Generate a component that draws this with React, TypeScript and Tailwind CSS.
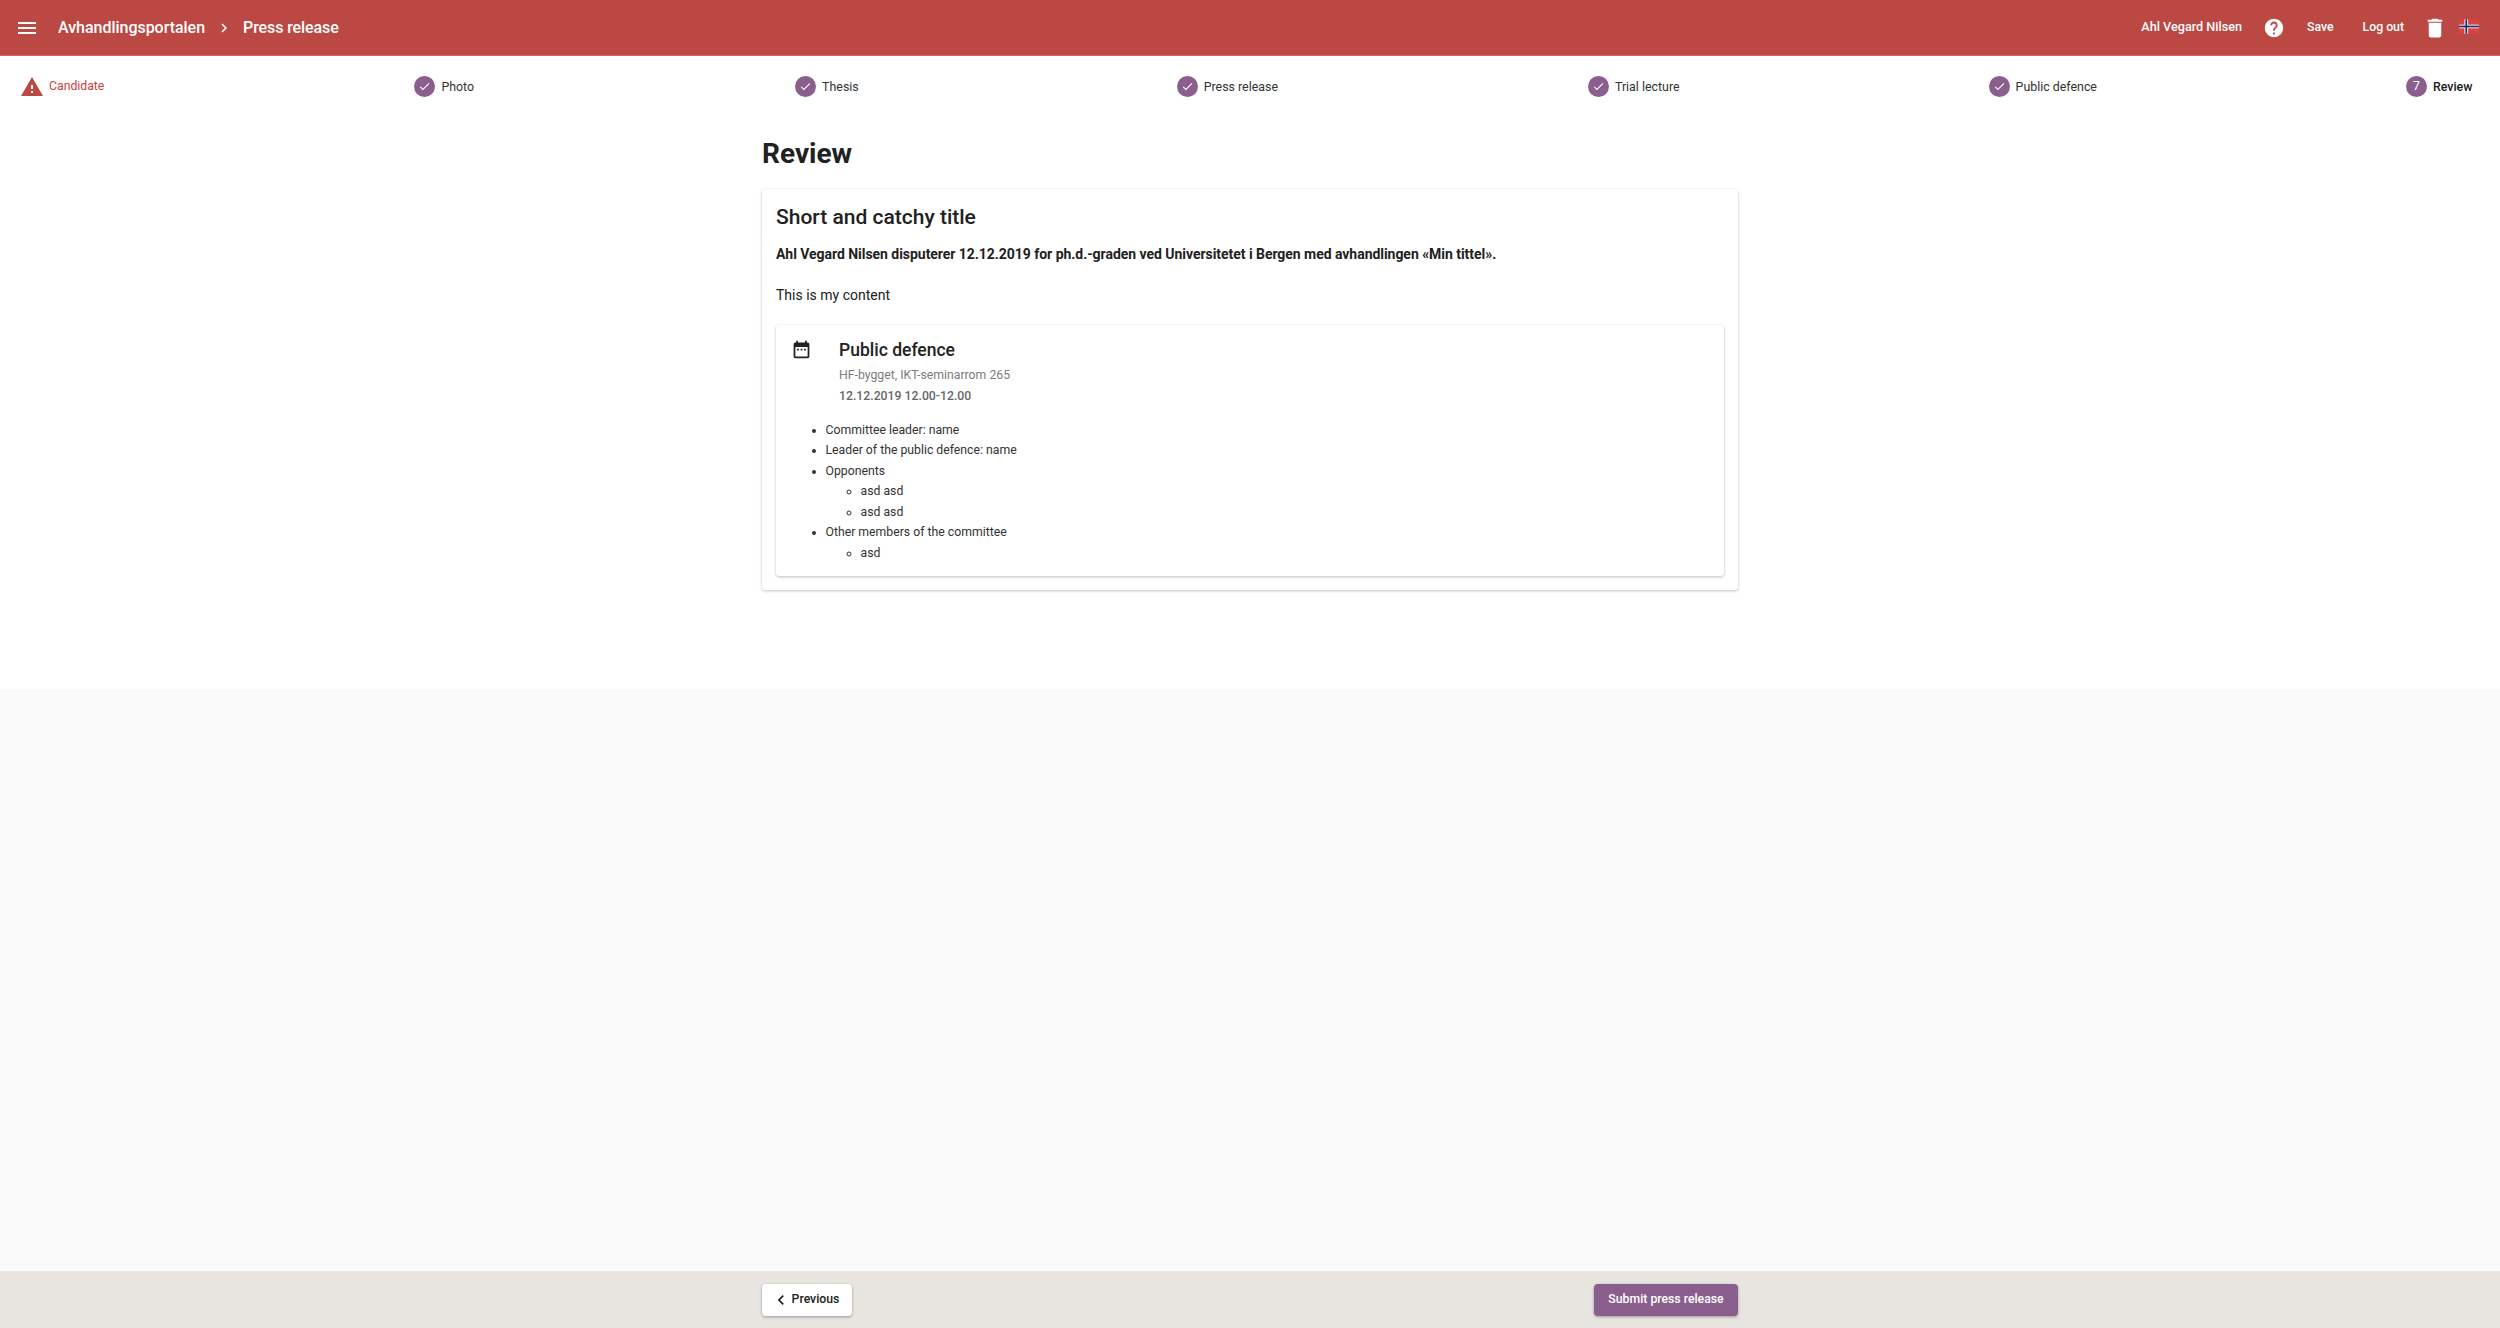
import React from "react";

const Check = () => (
  <span className="flex h-[21px] w-[21px] shrink-0 items-center justify-center rounded-full bg-[#8a5f8d]">
    <svg viewBox="0 0 24 24" className="h-[13px] w-[13px]" fill="#ffffff">
      <path d="M9 16.17 4.83 12l-1.42 1.41L9 19 21 7l-1.41-1.41z" />
    </svg>
  </span>
);

const Step = ({ label, ml }: { label: string; ml: string }) => (
  <div className={`flex items-center ${ml}`}>
    <Check />
    <span className="ml-[6px] text-[12.4px] leading-[21px] text-[#333333]">{label}</span>
  </div>
);

const Flag = () => (
  <svg viewBox="0 0 22 16" className="h-[15px] w-[20px]">
    <rect width="22" height="16" fill="#d9423f" />
    <rect x="6" width="4" height="16" fill="#ffffff" />
    <rect y="6" width="22" height="4" fill="#ffffff" />
    <rect x="7" width="2" height="16" fill="#1f2f6e" />
    <rect y="7" width="22" height="2" fill="#1f2f6e" />
  </svg>
);

export default function App() {
  return (
    <div className="flex h-[1328px] w-full flex-col overflow-hidden bg-[#fafafa] font-['Roboto','Liberation_Sans',sans-serif] text-[#212121]">
      <header className="flex h-[56px] shrink-0 items-center border-b border-[#e0605a] bg-[#bc4843] pl-[15px] pr-[21px] text-white">
        <svg viewBox="0 0 24 24" className="h-[24px] w-[24px]" fill="#ffffff">
          <path d="M3 18h18v-2H3v2zm0-5h18v-2H3v2zm0-7v2h18V6H3z" />
        </svg>
        <span className="ml-[19px] text-[16px] font-medium leading-[24px] tracking-[-0.03px]">Avhandlingsportalen</span>
        <svg viewBox="0 0 24 24" className="ml-[10px] h-[18px] w-[18px]" fill="#ffffff">
          <path d="M8.59 16.59 13.17 12 8.59 7.41 10 6l6 6-6 6z" />
        </svg>
        <span className="ml-[10px] text-[16px] font-medium leading-[24px] tracking-[-0.1px]">Press release</span>
        <div className="ml-auto flex items-center">
          <span className="text-[12.65px] font-medium">Ahl Vegard Nilsen</span>
          <svg viewBox="0 0 24 24" className="ml-[21px] h-[22px] w-[22px]" fill="#ffffff">
            <path d="M12 2C6.48 2 2 6.48 2 12s4.48 10 10 10 10-4.48 10-10S17.52 2 12 2zm1 17h-2v-2h2v2zm2.07-7.75-.9.92C13.45 12.9 13 13.5 13 15h-2v-.5c0-1.1.45-2.1 1.17-2.83l1.24-1.26c.37-.36.59-.86.59-1.41 0-1.1-.9-2-2-2s-2 .9-2 2H8c0-2.21 1.79-4 4-4s4 1.79 4 4c0 .88-.36 1.68-.93 2.25z" />
          </svg>
          <span className="ml-[22px] text-[12.25px] font-medium">Save</span>
          <span className="ml-[29px] text-[12.25px] font-medium">Log out</span>
          <svg viewBox="0 0 24 24" className="ml-[21px] h-[20px] w-[20px] scale-125" fill="#ffffff">
            <path d="M6 19c0 1.1.9 2 2 2h8c1.1 0 2-.9 2-2V7H6v12zM19 4h-3.5l-1-1h-5l-1 1H5v2h14V4z" />
          </svg>
          <span className="ml-[14px] flex -translate-y-[1px]"><Flag /></span>
        </div>
      </header>

      <main className="shrink-0 bg-white">
        <nav className="mb-[2px] flex h-[61px] items-center pl-[22px]">
          <div className="flex items-center">
            <svg viewBox="0 0 24 24" className="h-[24px] w-[24px]" style={{ margin: "0 -2px" }} fill="#bc4843">
              <path d="M1 21h22L12 2 1 21zm12-3h-2v-2h2v2zm0-4h-2v-4h2v4z" />
            </svg>
            <span className="ml-[7px] text-[12.25px] leading-[21px] text-[#c9413c]">Candidate</span>
          </div>
          <Step label="Photo" ml="ml-[310px]" />
          <Step label="Thesis" ml="ml-[321px]" />
          <Step label="Press release" ml="ml-[318px]" />
          <Step label="Trial lecture" ml="ml-[310px]" />
          <Step label="Public defence" ml="ml-[309px]" />
          <div className="ml-[309px] flex items-center">
            <span className="flex h-[21px] w-[21px] items-center justify-center rounded-full bg-[#8a5f8d] text-[12.25px] text-white">7</span>
            <span className="ml-[6px] text-[12.4px] font-medium leading-[21px] text-[#212121]">Review</span>
          </div>
        </nav>

        <div className="mx-auto h-[570px] w-[976px] pt-[17px]">
          <h1 className="text-[28px] font-bold leading-[36px] text-[#212121]">Review</h1>
          <section className="mt-[17px] h-[401px] rounded-[3px] bg-white px-[14px] pt-[14px] shadow-[0_1px_3px_rgba(0,0,0,0.25),0_0_1px_rgba(0,0,0,0.08)]">
            <h2 className="text-[21px] font-medium leading-[28px] text-[#212121]">Short and catchy title</h2>
            <p className="mt-[13px] text-[14px] font-bold leading-[21px] tracking-[-0.04px]">
              Ahl Vegard Nilsen disputerer 12.12.2019 for ph.d.-graden ved Universitetet i Bergen med avhandlingen «Min tittel».
            </p>
            <p className="mt-[20px] text-[14px] leading-[21px]">This is my content</p>
            <article className="mt-[19px] h-[251px] rounded-[3px] bg-white px-[16px] pt-[14px] shadow-[0_1px_3px_rgba(0,0,0,0.25),0_0_1px_rgba(0,0,0,0.08)]">
              <div className="flex">
                <svg viewBox="0 0 24 24" className="-ml-[1px] h-[21px] w-[21px]" fill="#212121">
                  <path d="M9 11H7v2h2v-2zm4 0h-2v2h2v-2zm4 0h-2v2h2v-2zm2-7h-1V2h-2v2H8V2H6v2H5c-1.11 0-1.99.9-1.99 2L3 20c0 1.1.89 2 2 2h14c1.1 0 2-.9 2-2V6c0-1.1-.9-2-2-2zm0 16H5V9h14v11z" />
                </svg>
                <div className="ml-[27px]">
                  <h3 className="-mt-[1px] text-[17.5px] font-medium leading-[24px] text-[#212121]">Public defence</h3>
                  <p className="mt-[3px] text-[12.25px] leading-[20px] text-[#7c7c7c]">HF-bygget, IKT-seminarrom 265</p>
                  <p className="mt-[1px] text-[12.25px] font-medium leading-[20px] text-[#666666]">12.12.2019 12.00-12.00</p>
                </div>
              </div>
              <ul className="ml-[33.5px] mt-[13.5px] list-disc text-[12.25px] leading-[20.5px] text-[#333333]">
                <li>Committee leader: name</li>
                <li>Leader of the public defence: name</li>
                <li>
                  Opponents
                  <ul className="ml-[35px] list-[circle]">
                    <li>asd asd</li>
                    <li>asd asd</li>
                  </ul>
                </li>
                <li>
                  Other members of the committee
                  <ul className="ml-[35px] list-[circle]">
                    <li>asd</li>
                  </ul>
                </li>
              </ul>
            </article>
          </section>
        </div>
      </main>

      <div className="flex-1" />

      <footer className="flex h-[57px] shrink-0 items-center bg-[#e8e5e1]">
        <div className="mx-auto flex w-[976px] items-center justify-between">
          <button className="flex h-[32px] w-[90px] items-center justify-center rounded-[4px] bg-white text-[12.25px] font-medium text-[#212121] shadow-[0_1px_3px_rgba(0,0,0,0.35)]">
            <svg viewBox="0 0 24 24" className="mr-[1px] h-[20px] w-[20px]" style={{ marginLeft: -4 }} fill="#212121">
              <path d="M15.41 7.41 14 6l-6 6 6 6 1.41-1.41L10.83 12z" />
            </svg>
            Previous
          </button>
          <button className="flex h-[32px] w-[144px] items-center justify-center rounded-[4px] bg-[#8a5f8d] text-[12.25px] font-medium text-white shadow-[0_1px_3px_rgba(0,0,0,0.35)]">
            Submit press release
          </button>
        </div>
      </footer>
    </div>
  );
}
